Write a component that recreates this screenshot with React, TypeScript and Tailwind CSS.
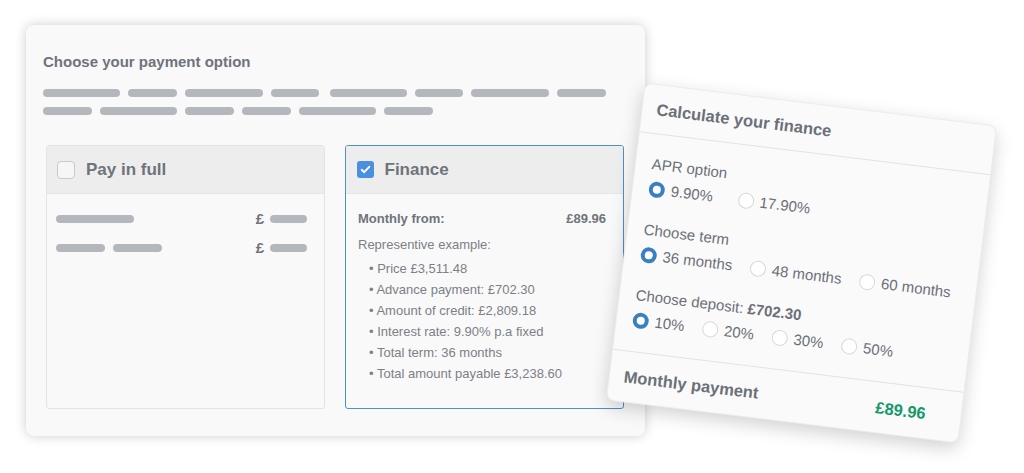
// Payment option chooser with a tilted finance calculator card laid over it.
import React from "react";

const FONT = "font-['Liberation_Sans',Arial,Helvetica,sans-serif]";

function Bar({ w }: { w: string }) {
  return <span className={["block h-[8px] rounded-full bg-[#b4b7bb]", w].join(" ")} />;
}

function Radio({ checked }: { checked?: boolean }) {
  return (
    <span
      className={[
        "block w-[16px] h-[16px] rounded-full bg-white shrink-0",
        checked ? "border-[4.5px] border-[#3a7fc2]" : "border-[1.5px] border-[#d8d8d8]",
      ].join(" ")}
    />
  );
}

function RadioRow({ options, gap }: { options: string[]; gap: string }) {
  return (
    <div className={["flex items-center h-[20px] mt-[5px]", gap].join(" ")}>
      {options.map((opt, i) => (
        <div key={opt} className="flex items-center gap-[6px]">
          <Radio checked={i === 0} />
          <span className="text-[15px] leading-[20px] text-[#6b7078]">{opt}</span>
        </div>
      ))}
    </div>
  );
}

function FinanceCalculator() {
  return (
    <div className="absolute left-[624px] top-[103px] w-[355px] h-[320px] rotate-[7deg] flex flex-col rounded-[8px] bg-[#fafafa] border border-[#ececec] shadow-[0_6px_18px_rgba(0,0,0,0.18)]">
      {/* Header */}
      <div className="h-[49px] shrink-0 flex items-center pl-[14px] border-b border-[#e3e3e3]">
        <p className="text-[16.5px] font-bold text-[#6b7079]">Calculate your finance</p>
      </div>

      {/* Options */}
      <div className="flex-1 px-[16px] pt-[20px] flex flex-col gap-[21px]">
        <div>
          <p className="text-[15px] leading-[20px] text-[#6b7078]">APR option</p>
          <RadioRow options={["9.90%", "17.90%"]} gap="gap-[25px]" />
        </div>
        <div>
          <p className="text-[15px] leading-[20px] text-[#6b7078]">Choose term</p>
          <RadioRow options={["36 months", "48 months", "60 months"]} gap="gap-[18px]" />
        </div>
        <div>
          <p className="text-[15px] leading-[20px] text-[#6b7078]">
            Choose deposit: <span className="font-bold">£702.30</span>
          </p>
          <RadioRow options={["10%", "20%", "30%", "50%"]} gap="gap-[18px]" />
        </div>
      </div>

      {/* Footer */}
      <div className="h-[51px] shrink-0 flex items-center justify-between pl-[14px] pr-[35px] border-t border-[#e3e3e3]">
        <p className="text-[16.5px] font-bold text-[#6b7079]">Monthly payment</p>
        <p className="text-[16.5px] font-bold text-[#17996a]">£89.96</p>
      </div>
    </div>
  );
}

function CardHeader({ label, checked }: { label: string; checked?: boolean }) {
  return (
    <div className="h-[48px] shrink-0 flex items-center bg-[#ededed] border-b border-[#e6e6e6] pl-[10px] gap-[11px]">
      {checked ? (
        <span className="w-[17px] h-[17px] ml-[0.5px] rounded-[3px] bg-[#4a8fe0] flex items-center justify-center">
          <svg width="13" height="13" viewBox="0 0 24 24" fill="none" stroke="white" strokeWidth="3.5" strokeLinecap="round" strokeLinejoin="round">
            <path d="M5 12.5l4.5 4.5L19 7" />
          </svg>
        </span>
      ) : (
        <span className="w-[18px] h-[18px] rounded-[4px] border-[1.5px] border-[#cacaca] bg-[#f6f6f6]" />
      )}
      <span className="text-[17px] font-bold text-[#6f747b]">{label}</span>
    </div>
  );
}

export default function App() {
  const row1 = ["w-[77px]", "w-[49px]", "w-[78px]", "w-[48px]", "w-[77px] ml-[3px]", "w-[48px]", "w-[78px]", "w-[49px]"];
  const row2 = ["w-[49px]", "w-[77px]", "w-[49px]", "w-[49px]", "w-[77px]", "w-[49px]"];
  const items = [
    "Price £3,511.48",
    "Advance payment: £702.30",
    "Amount of credit: £2,809.18",
    "Interest rate: 9.90% p.a fixed",
    "Total term: 36 months",
    "Total amount payable £3,238.60",
  ];

  return (
    <div className={["relative w-[1024px] h-[473px] bg-white overflow-hidden pl-[26px] pt-[25px]", FONT].join(" ")}>
      <div className="w-[619px] h-[411px] rounded-[8px] bg-[#f9f9f9] shadow-[0_0_12px_rgba(0,0,0,0.2)] pt-[27px]">
        <div className="px-[17px]">
          <h1 className="text-[15px] leading-[20px] font-bold text-[#6e737b]">Choose your payment option</h1>
          <div className="mt-[17px] flex flex-col gap-[9.5px]">
            <div className="flex gap-[8px]">
              {row1.map((w, i) => (
                <Bar key={i} w={w} />
              ))}
            </div>
            <div className="flex gap-[8px]">
              {row2.map((w, i) => (
                <Bar key={i} w={w} />
              ))}
            </div>
          </div>
        </div>

        <div className="mx-[20px] mt-[30.5px] flex gap-[20px]">
          {/* Pay in full */}
          <div className="w-[279px] h-[264px] flex flex-col border border-[#e3e3e3] rounded-[3px] overflow-hidden bg-[#f9f9f9]">
            <CardHeader label="Pay in full" />
            <div className="pl-[9px] pr-[17px] pt-[21px] flex flex-col gap-[21px]">
              <div className="flex items-center justify-between h-[8px]">
                <Bar w="w-[78px]" />
                <div className="flex items-center gap-[6px]">
                  <span className="text-[15px] font-bold text-[#6f747b]">£</span>
                  <Bar w="w-[37px]" />
                </div>
              </div>
              <div className="flex items-center justify-between h-[8px]">
                <div className="flex gap-[8px]">
                  <Bar w="w-[49px]" />
                  <Bar w="w-[49px]" />
                </div>
                <div className="flex items-center gap-[6px]">
                  <span className="text-[15px] font-bold text-[#6f747b]">£</span>
                  <Bar w="w-[37px]" />
                </div>
              </div>
            </div>
          </div>

          {/* Finance */}
          <div className="w-[279px] h-[264px] flex flex-col border border-[#4f8fcb] rounded-[3px] overflow-hidden bg-[#f9f9f9]">
            <CardHeader label="Finance" checked />
            <div className="pl-[12px] pr-[17px] pt-[17px]">
              <div className="flex justify-between text-[13px] leading-[16px] font-bold text-[#6f747b]">
                <span>Monthly from:</span>
                <span>£89.96</span>
              </div>
              <p className="mt-[7px] text-[13px] leading-[21px] text-[#7c8087]">Representive example:</p>
              <ul className="mt-[3px] pl-[11px] text-[13px] leading-[21px] text-[#7c8087]">
                {items.map((t) => (
                  <li key={t}>• {t}</li>
                ))}
              </ul>
            </div>
          </div>
        </div>
      </div>

      <FinanceCalculator />
    </div>
  );
}
